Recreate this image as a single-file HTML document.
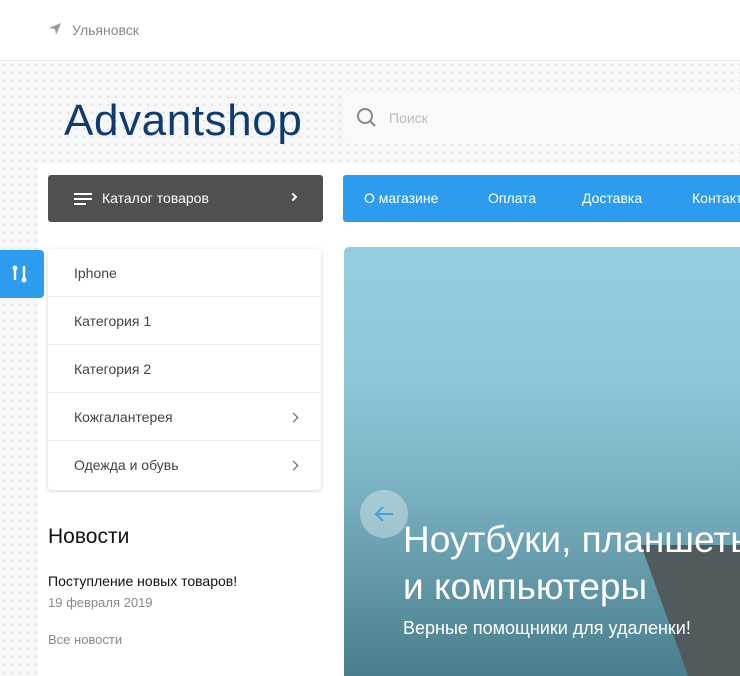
<!DOCTYPE html>
<html><head><meta charset="utf-8"><style>
*{margin:0;padding:0;box-sizing:border-box}
html,body{width:740px;height:676px;overflow:hidden}
body{position:relative;background:#fff;font-family:"Liberation Sans",sans-serif}
.dots{position:absolute;left:0;top:60px;width:740px;height:616px;background-color:#f7f7f7;background-image:radial-gradient(circle,#e2e2e2 1px,transparent 1.3px);background-size:8px 8px;border-top:1px solid #eee}
.main{position:absolute;left:38px;top:163px;width:702px;height:513px;background:#fff}
.abs{position:absolute}
.menu div{height:48px;border-bottom:1px solid #eee;padding-left:26px;line-height:48px;font-size:14px;color:#444;position:relative}
.menu div:last-child{border-bottom:none}
.chev{position:absolute;right:24px;top:21px;width:7px;height:7px;border-right:1.5px solid #555;border-top:1.5px solid #555;transform:rotate(45deg)}
.nav span{position:absolute;top:0;line-height:47px;color:#fff;font-size:14px}
</style></head><body>
<svg class="abs" style="left:48px;top:22px" width="14" height="14" viewBox="0 0 14 14"><path d="M13 1L1 6l6 1 1 6z" fill="#999"/></svg>
<div class="abs" style="left:72px;top:22px;font-size:14px;color:#888">Ульяновск</div>
<div class="dots"></div>
<div class="main"></div>
<div class="abs" style="left:64px;top:96px;font-size:44px;color:#0f3c6e;letter-spacing:0.6px">Advantshop</div>
<div class="abs" style="left:342px;top:94px;width:398px;height:50px;background:#f9f9f9;border-radius:4px 0 0 4px"></div>
<svg class="abs" style="left:356px;top:107px" width="22" height="22" viewBox="0 0 22 22"><circle cx="9" cy="9" r="7" fill="none" stroke="#888" stroke-width="2"/><path d="M14 14l5 5" stroke="#888" stroke-width="2"/></svg>
<div class="abs" style="left:389px;top:110px;font-size:14px;color:#bbb">Поиск</div>
<div class="abs" style="left:48px;top:175px;width:275px;height:47px;background:#505050;border-radius:3px"></div>
<svg class="abs" style="left:74px;top:193px" width="19" height="12"><path d="M0 1h18M0 6h18M0 11h12" stroke="#fff" stroke-width="2"/></svg>
<div class="abs" style="left:102px;top:190px;font-size:14px;color:#fff">Каталог товаров</div>
<div class="abs" style="left:290px;top:194px;width:6px;height:6px;border-right:2px solid #fff;border-top:2px solid #fff;transform:rotate(45deg)"></div>
<div class="abs nav" style="left:343px;top:175px;width:397px;height:47px;background:#2d9cee;border-radius:3px 0 0 3px">
<span style="left:21px">О магазине</span><span style="left:145px">Оплата</span><span style="left:239px">Доставка</span><span style="left:349px">Контакты</span></div>
<div class="abs" style="left:0;top:250px;width:44px;height:48px;background:#2d9cee;border-radius:0 4px 4px 0"></div>
<svg class="abs" style="left:11px;top:264px" width="18" height="20" viewBox="0 0 18 20"><circle cx="4" cy="4" r="2.5" fill="#fff"/><path d="M4 4v12M13 2v13" stroke="#fff" stroke-width="2.4"/><circle cx="13" cy="16" r="2.5" fill="#fff"/></svg>
<div class="abs menu" style="left:48px;top:249px;width:273px;height:241px;background:#fff;border-radius:4px;box-shadow:0 1px 4px rgba(0,0,0,.18)">
<div>Iphone</div><div>Категория 1</div><div>Категория 2</div><div>Кожгалантерея<i class="chev"></i></div><div>Одежда и обувь<i class="chev"></i></div></div>
<div class="abs" style="left:48px;top:525px;font-size:21px;color:#111">Новости</div>
<div class="abs" style="left:48px;top:573px;font-size:14px;color:#111">Поступление новых товаров!</div>
<div class="abs" style="left:48px;top:595px;font-size:13px;color:#888">19 февраля 2019</div>
<div class="abs" style="left:48px;top:632px;font-size:13px;color:#888">Все новости</div>
<div class="abs" style="left:344px;top:247px;width:396px;height:429px;border-radius:5px 0 0 0;overflow:hidden;background:linear-gradient(180deg,#95cde0 0%,#8fc7da 30%,#7cb3c4 55%,#5f95a4 80%,#4a7e8c 100%)">
<div class="abs" style="left:297px;top:298px;width:120px;height:140px;background:#515a5d;clip-path:polygon(0 0,100% 0,100% 100%,42% 100%)"></div>
<div class="abs" style="left:16px;top:243px;width:48px;height:48px;border-radius:50%;background:rgba(255,255,255,.35)"></div>
<svg class="abs" style="left:29px;top:258px" width="22" height="18"><path d="M20 9H3M10 2L3 9l7 7" fill="none" stroke="#4a9fd6" stroke-width="2"/></svg>
<div class="abs" style="left:59px;top:269px;font-size:37px;color:#fff;line-height:47px;white-space:nowrap">Ноутбуки, планшеты<br>и компьютеры</div>
<div class="abs" style="left:59px;top:371px;font-size:18px;color:#fff">Верные помощники для удаленки!</div>
</div>
</body></html>
